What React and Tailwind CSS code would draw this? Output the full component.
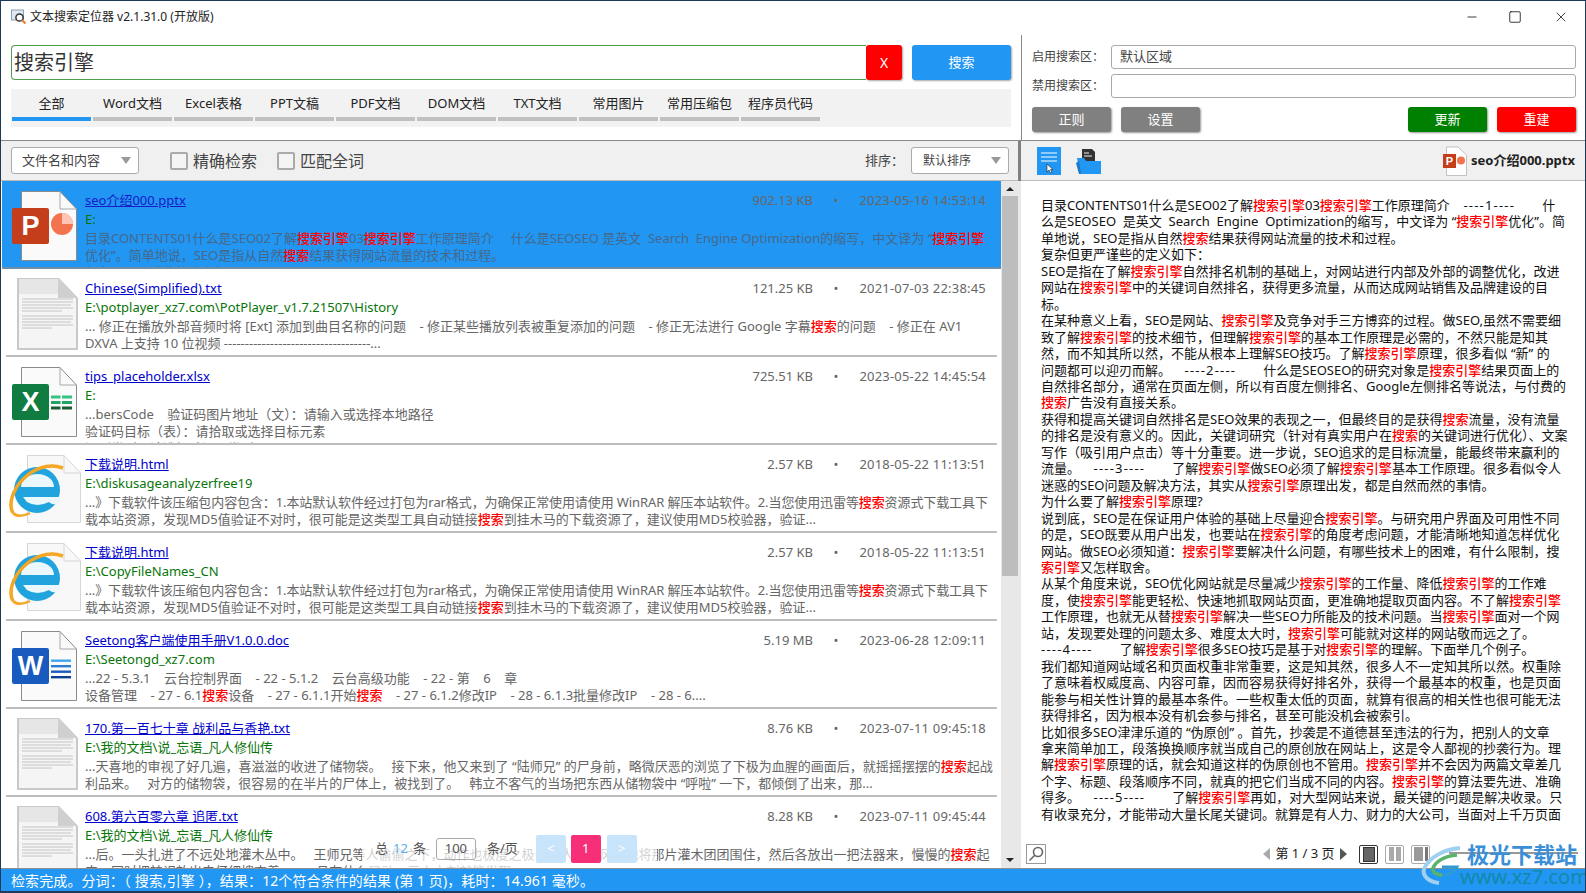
import React from "react";
import { Minus, Square, X } from "lucide-react";

const PATH_NOVEL = "E:\\我的文档\\说_忘语_凡人修仙传";
const HTML_LINE_1 = "...》下载软件该压缩包内容包含：1.本站默认软件经过打包为rar格式，为确保正常使用请使用 WinRAR 解压本站软件。2.当您使用迅雷等搜索资源式下载工具下";
const HTML_LINE_2 = "载本站资源，发现MD5值验证不对时，很可能是这类型工具自动链接搜索到挂木马的下载资源了，建议使用MD5校验器，验证...";

const results = [
  {
    name: "seo介绍000.pptx", path: "E:", size: "902.13 KB", date: "2023-05-16 14:53:14", icon: "ppt", active: true,
    body: [
      "目录CONTENTS01什么是SEO02了解搜索引擎03搜索引擎工作原理简介     什么是SEOSEO 是英文  Search  Engine Optimization的缩写，中文译为 “搜索引擎",
      "优化”。简单地说，SEO是指从自然搜索结果获得网站流量的技术和过程。",
      "复杂但更严谨些的定义如下：",
    ],
  },
  {
    name: "Chinese(Simplified).txt", path: "E:\\potplayer_xz7.com\\PotPlayer_v1.7.21507\\History", size: "121.25 KB", date: "2021-07-03 22:38:45", icon: "txt",
    body: [
      "... 修正在播放外部音频时将 [Ext] 添加到曲目名称的问题    - 修正某些播放列表被重复添加的问题    - 修正无法进行 Google 字幕搜索的问题    - 修正在 AV1",
      "DXVA 上支持 10 位视频 -----------------------------------...",
    ],
  },
  {
    name: "tips_placeholder.xlsx", path: "E:", size: "725.51 KB", date: "2023-05-22 14:45:54", icon: "xls",
    body: ["...bersCode    验证码图片地址（文）：请输入或选择本地路径", "验证码目标（表）：请拾取或选择目标元素", "识别类型：请选择验证码类型"],
  },
  { name: "下载说明.html", path: "E:\\diskusageanalyzerfree19", size: "2.57 KB", date: "2018-05-22 11:13:51", icon: "ie", squeeze: true, body: [HTML_LINE_1, HTML_LINE_2] },
  { name: "下载说明.html", path: "E:\\CopyFileNames_CN", size: "2.57 KB", date: "2018-05-22 11:13:51", icon: "ie", squeeze: true, body: [HTML_LINE_1, HTML_LINE_2] },
  {
    name: "Seetong客户端使用手册V1.0.0.doc", path: "E:\\Seetongd_xz7.com", size: "5.19 MB", date: "2023-06-28 12:09:11", icon: "doc",
    body: [
      "...22 - 5.3.1    云台控制界面    - 22 - 5.1.2    云台高级功能    - 22 - 第    6    章",
      "设备管理    - 27 - 6.1搜索设备    - 27 - 6.1.1开始搜索    - 27 - 6.1.2修改IP    - 28 - 6.1.3批量修改IP    - 28 - 6....",
    ],
  },
  {
    name: "170.第一百七十章 战利品与香艳.txt", path: PATH_NOVEL, size: "8.76 KB", date: "2023-07-11 09:45:18", icon: "txt",
    body: [
      "...天喜地的审视了好几遍，喜滋滋的收进了储物袋。   接下来，他又来到了 “陆师兄” 的尸身前，略微厌恶的浏览了下极为血腥的画面后，就摇摇摆摆的搜索起战",
      "利品来。   对方的储物袋，很容易的在半片的尸体上，被找到了。   韩立不客气的当场把东西从储物袋中 “呼啦” 一下，都倾倒了出来，那...",
    ],
  },
  {
    name: "608.第六百零六章 追匿.txt", path: PATH_NOVEL, size: "8.28 KB", date: "2023-07-11 09:45:44", icon: "txt",
    body: [
      "...后。一头扎进了不远处地灌木丛中。   王师兄等人偷偷之下，动作也极度之极，三人一阵风般地将那片灌木团团围住，然后各放出一把法器来，慢慢的搜索起",
      "来，同时把神识放出去仔细搜查着。   一旦有什么异动，三人立刻就能发现。",
    ],
  },
];

const tabs = ["全部", "Word文档", "Excel表格", "PPT文稿", "PDF文档", "DOM文档", "TXT文档", "常用图片", "常用压缩包", "程序员代码"];

const previewLines = [
  "目录CONTENTS01什么是SEO02了解搜索引擎03搜索引擎工作原理简介    ----1----        什",
  "么是SEOSEO  是英文  Search  Engine  Optimization的缩写，中文译为 “搜索引擎优化”。简",
  "单地说，SEO是指从自然搜索结果获得网站流量的技术和过程。",
  "复杂但更严谨些的定义如下：",
  "SEO是指在了解搜索引擎自然排名机制的基础上，对网站进行内部及外部的调整优化，改进",
  "网站在搜索引擎中的关键词自然排名，获得更多流量，从而达成网站销售及品牌建设的目",
  "标。",
  "在某种意义上看，SEO是网站、搜索引擎及竞争对手三方博弈的过程。做SEO,虽然不需要细",
  "致了解搜索引擎的技术细节，但理解搜索引擎的基本工作原理是必需的，不然只能是知其",
  "然，而不知其所以然，不能从根本上理解SEO技巧。了解搜索引擎原理，很多看似 “新” 的",
  "问题都可以迎刃而解。    ----2----        什么是SEOSEO的研究对象是搜索引擎结果页面上的",
  "自然排名部分，通常在页面左侧，所以有百度左侧排名、Google左侧排名等说法，与付费的",
  "搜索广告没有直接关系。",
  "获得和提高关键词自然排名是SEO效果的表现之一，但最终目的是获得搜索流量，没有流量",
  "的排名是没有意义的。因此，关键词研究（针对有真实用户在搜索的关键词进行优化）、文案",
  "写作（吸引用户点击）等十分重要。进一步说，SEO追求的是目标流量，能最终带来赢利的",
  "流量。    ----3----        了解搜索引擎做SEO必须了解搜索引擎基本工作原理。很多看似令人",
  "迷惑的SEO问题及解决方法，其实从搜索引擎原理出发，都是自然而然的事情。",
  "为什么要了解搜索引擎原理?",
  "说到底，SEO是在保证用户体验的基础上尽量迎合搜索引擎。与研究用户界面及可用性不同",
  "的是，SEO既要从用户出发，也要站在搜索引擎的角度考虑问题，才能清晰地知道怎样优化",
  "网站。做SEO必须知道：搜索引擎要解决什么问题，有哪些技术上的困难，有什么限制，搜",
  "索引擎又怎样取舍。",
  "从某个角度来说，SEO优化网站就是尽量减少搜索引擎的工作量、降低搜索引擎的工作难",
  "度，使搜索引擎能更轻松、快速地抓取网站页面，更准确地提取页面内容。不了解搜索引擎",
  "工作原理，也就无从替搜索引擎解决一些SEO力所能及的技术问题。当搜索引擎面对一个网",
  "站，发现要处理的问题太多、难度太大时，搜索引擎可能就对这样的网站敬而远之了。",
  "----4----        了解搜索引擎很多SEO技巧是基于对搜索引擎的理解。下面举几个例子。",
  "我们都知道网站域名和页面权重非常重要，这是知其然，很多人不一定知其所以然。权重除",
  "了意味着权威度高、内容可靠，因而容易获得好排名外，获得一个最基本的权重，也是页面",
  "能参与相关性计算的最基本条件。一些权重太低的页面，就算有很高的相关性也很可能无法",
  "获得排名，因为根本没有机会参与排名，甚至可能没机会被索引。",
  "比如很多SEO津津乐道的 “伪原创” 。首先，抄袭是不道德甚至违法的行为，把别人的文章",
  "拿来简单加工，段落换换顺序就当成自己的原创放在网站上，这是令人鄙视的抄袭行为。理",
  "解搜索引擎原理的话，就会知道这样的伪原创也不管用。搜索引擎并不会因为两篇文章差几",
  "个字、标题、段落顺序不同，就真的把它们当成不同的内容。搜索引擎的算法要先进、准确",
  "得多。    ----5----        了解搜索引擎再如，对大型网站来说，最关键的问题是解决收录。只",
  "有收录充分，才能带动大量长尾关键词。就算是有人力、财力的大公司，当面对上千万页面",
];

function Hl({ text }) {
  // 红色高亮关键词，分隔线单独加宽
  const parts = text.split(/(搜索引擎|搜索|^索引擎|-{4}\d-{4})/);
  return parts.map((p, i) => {
    if (i % 2 === 0) return <React.Fragment key={i}>{p}</React.Fragment>;
    if (p.startsWith("-")) return <span key={i} className="tracking-[1.2px]">{p}</span>;
    return <span key={i} className="text-[#ff0000] font-medium">{p}</span>;
  });
}

function Badge({ color, letter }) {
  return (
    <>
      <rect x="10" y="27" width="37" height="36" rx="2" fill={color} />
      <text x="28.5" y="54" textAnchor="middle" fontSize="27" fontWeight="700" fill="#fff" fontFamily="Liberation Sans, sans-serif">
        {letter}
      </text>
    </>
  );
}

function Page() {
  return (
    <>
      <path d="M19.5 10.5H58L74.5 28V79.5H19.5Z" fill="#fafafa" stroke="#8a8a8a" strokeWidth="1" />
      <path d="M58 10.5V28H74.5" fill="none" stroke="#a8a8a8" strokeWidth="1" />
    </>
  );
}

function FileIcon({ type }) {
  return (
    <svg className="w-[83px] h-[88px] shrink-0" viewBox="0 0 83 88">
      {type === "ppt" && (
        <>
          <Page />
          <Badge color="#c43e1c" letter="P" />
          <circle cx="60" cy="43" r="11" fill="#f3734f" />
          <path d="M60 32a11 11 0 0 1 11 11H60Z" fill="#ffc4b6" />
        </>
      )}
      {type === "xls" && (
        <>
          <Page />
          <Badge color="#107c41" letter="X" />
          <path d="M49 38.5h9.5v3H49ZM60 38.5h10v3H60Z" fill="#33c481" />
          <path d="M49 44h9.5v3H49ZM60 44h10v3H60Z" fill="#21a366" />
          <path d="M49 49.5h9.5v3H49ZM60 49.5h10v3H60Z" fill="#185c37" />
        </>
      )}
      {type === "doc" && (
        <>
          <Page />
          <Badge color="#185abd" letter="W" />
          <path d="M49 38.5h20v2.4H49Z" fill="#41a5ee" />
          <path d="M49 44h20v2.4H49Z" fill="#2b7cd3" />
          <path d="M49 49.5h20v2.4H49Z" fill="#185abd" />
          <path d="M49 55h20v2.4H49Z" fill="#103f91" />
        </>
      )}
      {type === "txt" && (
        <>
          <path d="M15 9H57L76 29V81H15Z" fill="#c9c9c9" />
          <path d="M17 10H56L74 29V79H17Z" fill="#f5f5f5" />
          <path d="M17 10H56V25H17Z" fill="#e6e6e6" />
          <path d="M56 10V29H74Z" fill="#cfcfcf" />
          <path d="M20 30h51M20 33h51M20 36h49M20 39h51M20 42h40M20 47h51M20 50h51M20 53h49M20 56h51M20 59h30" stroke="#c4c4c4" strokeWidth="1" />
        </>
      )}
      {type === "ie" && (
        <>
          <path d="M25.5 10.5H62L78.5 28V77.5H25.5Z" fill="#f8f8f8" stroke="#d6d6d6" strokeWidth="1" />
          <path d="M62 10.5V28H78.5" fill="none" stroke="#d6d6d6" strokeWidth="1" />
          <circle cx="35" cy="45" r="23" fill="#21a3dd" />
          <path d="M19 42a16.5 13 0 0 1 33 0Z" fill="#eaf8fe" />
          <path d="M21 52H59L57 58Q51 61 47 57Q35 63 25 57Z" fill="#eaf8fe" />
          <path d="M11 68C1 50 30 12 61 23" fill="none" stroke="#f5a623" strokeWidth="3.5" />
          <path d="M11 68C15 72 22 71 28 68" fill="none" stroke="#f5a623" strokeWidth="2.5" />
        </>
      )}
    </svg>
  );
}

function ResultRow({ item }) {
  return (
    <div className={`h-[88px] overflow-hidden flex border-b-2 ${item.active ? "bg-[#2196f3] border-[#6f8ea8]" : "bg-white border-[#bdbdbd] mx-[4px]"}`}>
      <div className={item.active ? "" : "-ml-[4px]"}>
        <FileIcon type={item.icon} />
      </div>
      <div className={`flex-1 min-w-0 pt-[10px] ${item.active ? "pr-[15px]" : "pr-[11px]"}`}>
        <div className="flex items-center h-[19px] text-[13px] whitespace-nowrap">
          <span className={`flex-1 underline ${item.active ? "text-[#1a1ac8]" : "text-[#0000cc]"}`}>{item.name}</span>
          <span className="text-[#666]">{item.size}</span>
          <span className="w-[46px] text-center text-[#666]">•</span>
          <span className="w-[127px] text-right tracking-[0.2px] text-[#666]">{item.date}</span>
        </div>
        <div className="h-[19px] leading-[19px] text-[13px] text-[#087508]">{item.path}</div>
        <div className={`mt-[1px] text-[13px] leading-[17px] ${item.active ? "text-[#46688a]" : "text-[#666]"}`}>
          {item.body.map((l, i) => (
            <div key={i} className={`whitespace-pre ${item.squeeze && i === 0 ? "tracking-[-0.1px]" : ""}`}>
              <Hl text={l} />
            </div>
          ))}
        </div>
      </div>
    </div>
  );
}

function Pager() {
  return (
    <div className="absolute left-[361px] bottom-0 w-[295px] h-[36px] bg-white/70 flex items-center pl-[13px] pb-[3px] text-[13px] text-[#555]">
      <span>总</span>
      <span className="text-[#5aaef0] mx-[5px]">12</span>
      <span>条</span>
      <span className="ml-[10px] w-[40px] h-[22px] border border-[#aaa] rounded-[3px] flex items-center justify-center">100</span>
      <span className="ml-[11px]">条/页</span>
      <span className="ml-[18px] w-[30px] h-[28px] rounded-[2px] bg-[#c8e4fb] flex items-center justify-center text-white">&lt;</span>
      <span className="ml-[5px] w-[30px] h-[28px] rounded-[2px] bg-[#f72f79] flex items-center justify-center text-white">1</span>
      <span className="ml-[6px] w-[30px] h-[28px] rounded-[2px] bg-[#c8e4fb] flex items-center justify-center text-white">&gt;</span>
    </div>
  );
}

function Caret() {
  return <span className="w-0 h-0 border-l-[5px] border-r-[5px] border-t-[7px] border-l-transparent border-r-transparent border-t-[#999]" />;
}

function Check({ label }) {
  return (
    <div className="flex items-center gap-[5px] text-[16px] text-[#444]">
      <span className="w-[18px] h-[18px] border-2 border-[#aaa] rounded-[2px] bg-[#f4f4f4]" />
      {label}
    </div>
  );
}

function Btn({ bg, w, children }) {
  return (
    <button className={`${bg} ${w} h-[25px] rounded-[3px] text-white text-[13px] shadow-[1px_1px_2px_rgba(0,0,0,0.4)]`}>
      {children}
    </button>
  );
}

function LayoutIcon({ active, children }) {
  return (
    <span className={`w-[19px] h-[19px] flex items-center justify-center rounded-[2px] border ${active ? "border-[#333]" : "border-[#aaa]"}`}>
      {children}
    </span>
  );
}

export default function App() {
  return (
    <div className="relative w-[1586px] h-[893px] overflow-hidden bg-white flex flex-col border-t border-l border-r border-b-2 border-[#1d3a5a] text-[#222] font-['Noto_Sans','Noto_Sans_CJK_SC',sans-serif]">
      {/* title bar */}
      <div className="h-[34px] pb-[3px] flex items-center shrink-0">
        <svg className="ml-[10px] w-[16px] h-[16px]" viewBox="0 0 16 16">
          <rect x="0.5" y="1" width="12" height="10" fill="#dfe8f0" stroke="#8aa0b4" />
          <circle cx="8.5" cy="8.5" r="3.6" fill="#fff" stroke="#333" strokeWidth="1.5" />
          <path d="M11 11l3.5 3.5" stroke="#e8792a" strokeWidth="2" />
        </svg>
        <span className="ml-[3px] text-[12px]">文本搜索定位器 v2.1.31.0 (开放版)</span>
        <div className="ml-auto flex items-center text-[#111]">
          <Minus className="w-[14px] h-[14px] mr-[29px]" strokeWidth={1.4} />
          <Square className="w-[14px] h-[14px] mr-[31px]" strokeWidth={1.4} />
          <X className="w-[16px] h-[16px] mr-[16px]" strokeWidth={1.2} />
        </div>
      </div>

      <div className="flex-1 min-h-0 flex">
        {/* left pane */}
        <div className="w-[1020px] shrink-0 flex flex-col">
          <div className="h-[106px] shrink-0 pt-[10px] pl-[10px] pr-[10px] border-b border-[#888]">
            <div className="flex h-[35px]">
              <input
                readOnly
                value="搜索引擎"
                className="flex-1 min-w-0 border border-[#4f9f4f] border-r-0 rounded-l-[4px] pl-[2px] pt-[1px] text-[20px] text-[#333] outline-none"
              />
              <button className="w-[36px] bg-[#ff0000] rounded-[3px] text-white text-[14px] shadow-[1px_1px_2px_rgba(0,0,0,0.35)]">X</button>
              <button className="ml-[10px] w-[99px] bg-[#2196f3] rounded-[3px] text-white text-[13px] shadow-[1px_1px_2px_rgba(0,0,0,0.35)]">搜索</button>
            </div>
            <div className="mt-[9px] h-[38px] bg-[#f2f2f2] flex gap-[2px] pl-[1px] pt-[3px]">
              {tabs.map((t, i) => (
                <div key={t} className="w-[79px] text-center text-[13px] text-[#222]">
                  <div className="h-[25px] leading-[22px]">{t}</div>
                  <div className={`h-[4px] ${i === 0 ? "bg-[#2196f3]" : "bg-[#c0c0c0]"}`} />
                </div>
              ))}
            </div>
          </div>

          <div className="h-[40px] shrink-0 bg-[#f0f0f0] border-b border-[#bbb] flex items-center pl-[10px] pr-[12px]">
            <div className="w-[128px] h-[27px] bg-white border border-[#aaa] rounded-[3px] flex items-center justify-between pl-[10px] pr-[7px] text-[13px] text-[#444]">
              文件名和内容
              <Caret />
            </div>
            <div className="ml-[31px]"><Check label="精确检索" /></div>
            <div className="ml-[20px]"><Check label="匹配全词" /></div>
            <span className="ml-auto text-[13px] text-[#444]">排序：</span>
            <div className="ml-[7px] w-[98px] h-[27px] bg-white border border-[#aaa] rounded-[3px] flex items-center justify-between pl-[11px] pr-[7px] text-[12px] text-[#444]">
              默认排序
              <Caret />
            </div>
          </div>

          <div className="flex-1 min-h-0 flex relative">
            <div className="flex-1 min-w-0 overflow-hidden pl-[1px]">
              {results.map((r, i) => (
                <ResultRow key={i} item={r} />
              ))}
            </div>
            <Pager />
            {/* scrollbar */}
            <div className="w-[20px] shrink-0 bg-[#e8e8e8] flex flex-col items-start pl-[1px] pt-[6px] pb-[6px]">
              <span className="ml-[4px] w-0 h-0 border-l-[4px] border-r-[4px] border-b-[4px] border-l-transparent border-r-transparent border-b-[#222]" />
              <div className="mt-[5px] w-[16px] h-[380px] bg-[#bdbdbd]" />
              <span className="ml-[4px] mt-auto w-0 h-0 border-l-[4px] border-r-[4px] border-t-[4px] border-l-transparent border-r-transparent border-t-[#222]" />
            </div>
          </div>
        </div>

        {/* right pane */}
        <div className="flex-1 min-w-0 flex flex-col">
          <div className="h-[106px] shrink-0 border-l border-b border-[#888] pl-[10px] pr-[9px] pt-[10px]">
            <div className="flex items-center h-[24px]">
              <span className="w-[79px] text-[12px] text-[#444]">启用搜索区：</span>
              <div className="flex-1 h-full border border-[#aaa] rounded-[3px] flex items-center pl-[8px] text-[13px] text-[#444]">默认区域</div>
            </div>
            <div className="flex items-center h-[24px] mt-[5px]">
              <span className="w-[79px] text-[12px] text-[#444]">禁用搜索区：</span>
              <div className="flex-1 h-full border border-[#aaa] rounded-[3px]" />
            </div>
            <div className="flex mt-[9px] gap-[10px]">
              <Btn bg="bg-[#808080]" w="w-[79px]">正则</Btn>
              <Btn bg="bg-[#808080]" w="w-[79px]">设置</Btn>
              <div className="ml-auto" />
              <Btn bg="bg-[#008000]" w="w-[79px]">更新</Btn>
              <Btn bg="bg-[#ff0000]" w="w-[79px]">重建</Btn>
            </div>
          </div>

          <div className="flex-1 min-h-0 flex flex-col border-l-[3px] border-[#808080] -ml-[3px]">
            <div className="h-[40px] shrink-0 bg-[#f0f0f0] border-b border-[#bbb] flex items-center pl-[16px] pr-[10px]">
              <svg className="w-[24px] h-[28px]" viewBox="0 0 24 28">
                <rect width="24" height="28" fill="#2196f3" />
                <path d="M4 6h16M4 10h16M4 14h16" stroke="#fff" strokeWidth="1" />
                <path d="M10 17v8l2-2 1.5 3 1.5-.7-1.5-2.8H16Z" fill="#fff" stroke="#222" strokeWidth="0.6" />
              </svg>
              <svg className="ml-[15px] w-[26px] h-[28px]" viewBox="0 0 26 28">
                <path d="M6 2h10l3 3v9H6Z" fill="#333" />
                <path d="M8 6h5M8 9h8" stroke="#f0f0f0" strokeWidth="1" />
                <path d="M1 11h7l2 3h15v13H4Z" fill="#2196f3" />
                <path d="M0 16l3 11h2L3 14Z" fill="#1a78c8" />
              </svg>
              <div className="ml-auto flex items-center">
                <svg className="w-[24px] h-[30px]" viewBox="0 0 24 30">
                  <path d="M3.5 1H15L23.5 9V29.5H3.5Z" fill="#fff" stroke="#aaa" strokeWidth="0.7" />
                  <rect y="8" width="13" height="14" fill="#c43e1c" />
                  <text x="6.5" y="19" textAnchor="middle" fontSize="11" fontWeight="700" fill="#fff" fontFamily="Liberation Sans, sans-serif">P</text>
                  <circle cx="18" cy="14.5" r="4" fill="#f3734f" />
                </svg>
                <span className="ml-[4px] text-[13px] font-bold text-[#222]">seo介绍000.pptx</span>
              </div>
            </div>

            <div className="flex-1 min-h-0 overflow-hidden pl-[20px] pt-[16px] text-[13px] leading-[16.45px] text-[#111]">
              {previewLines.map((l, i) => (
                <div key={i} className="whitespace-pre">
                  <Hl text={l} />
                </div>
              ))}
            </div>

            <div className="h-[28px] shrink-0 flex items-center pl-[5px]">
              <span className="w-[20px] h-[20px] border border-[#999] flex items-center justify-center">
                <svg className="w-[16px] h-[16px]" viewBox="0 0 16 16" fill="none" stroke="#666" strokeWidth="1.6">
                  <circle cx="10" cy="6" r="4.5" />
                  <path d="M6.5 9.5L1.5 14.5" />
                </svg>
              </span>
              <span className="ml-[217px] w-0 h-0 border-y-[6px] border-r-[7px] border-y-transparent border-r-[#aaa]" />
              <span className="ml-[3px] w-[64px] text-center text-[13px] whitespace-nowrap text-[#222]">第 1 / 3 页</span>
              <span className="ml-[3px] w-0 h-0 border-y-[6px] border-l-[7px] border-y-transparent border-l-[#555]" />
              <div className="ml-[12px] flex gap-[7px]">
                <LayoutIcon active>
                  <span className="w-[12px] h-[15px] bg-[#666] border border-[#333]" />
                </LayoutIcon>
                <LayoutIcon>
                  <span className="flex gap-[2px]">
                    <span className="w-[5px] h-[14px] bg-[#aaa]" />
                    <span className="w-[5px] h-[14px] bg-[#aaa]" />
                  </span>
                </LayoutIcon>
                <LayoutIcon>
                  <span className="flex gap-[2px]">
                    <span className="w-[9px] h-[14px] bg-[#999]" />
                    <span className="w-[3px] h-[14px] bg-[#777]" />
                  </span>
                </LayoutIcon>
              </div>
            </div>
          </div>
        </div>
      </div>

      {/* status bar */}
      <div className="h-[23px] shrink-0 bg-[#2196f3] border-t border-[#8f8f8f] flex items-center pl-[10px] text-[14px] tracking-[0.1px] text-white whitespace-pre">
        检索完成。分词：（ 搜索,引擎 ），结果：12个符合条件的结果 (第 1 页)，耗时：14.961 毫秒。
      </div>

      {/* watermark */}
      <div className="absolute right-[7px] bottom-0 w-[157px] h-[47px] pointer-events-none">
        <div className="absolute left-[28px] right-0 top-[8px] h-[2px] bg-[#999]" />
        <svg className="absolute left-0 top-[0px] w-[44px] h-[44px]" viewBox="0 0 44 42" fill="none">
          <path d="M39 3C24 4 8 12 3 24c-2 7 5 13 15 14" stroke="#9fd0ef" strokeWidth="4" />
          <path d="M36 10C24 11 15 16 12 23c-1 4 3 7 9 7" stroke="#59b36a" strokeWidth="3.5" />
          <path d="M21 30c7 0 13-3 15-8H21" stroke="#2f9ad6" strokeWidth="3" />
        </svg>
        <span className="absolute left-[46px] top-[-4px] text-[22px] leading-[28px] font-bold whitespace-nowrap text-[#3a8fd8]">极光下载站</span>
        <span className="absolute left-[39px] top-[21px] text-[20px] leading-[24px] whitespace-nowrap text-[#1389a8]">www.xz7.com</span>
      </div>
    </div>
  );
}
